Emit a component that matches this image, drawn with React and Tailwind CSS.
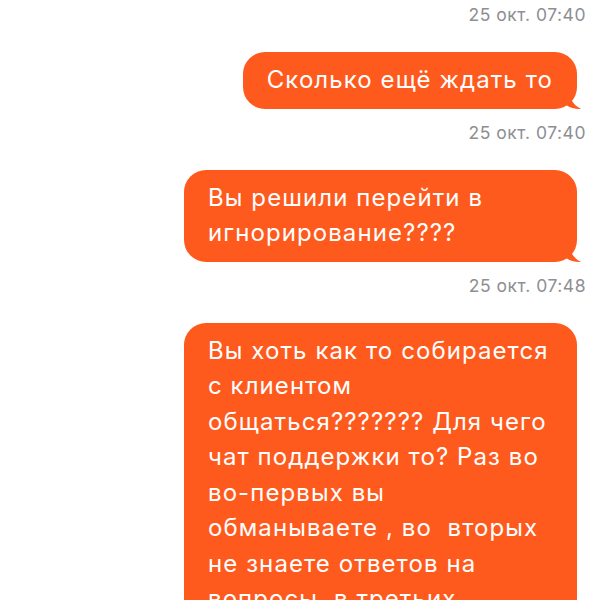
const messages = [
  { time: '25 окт. 07:40', text: 'Сколько ещё ждать то' },
  { time: '25 окт. 07:40', text: 'Вы решили перейти в игнорирование????' },
  {
    time: '25 окт. 07:48',
    text: 'Вы хоть как то собирается с клиентом общаться??????? Для чего чат поддержки то? Раз во во-первых вы обманываете , во  вторых не знаете ответов на вопросы, в третьих игнорируете',
  },
];

const Tail = () => (
  <svg className="absolute bottom-0 right-[-4px]" width="16" height="20" viewBox="0 0 16 20">
    <path d="M0 0 L4 0 C4 9 8 16 16 20 C9 20 3 18 0 15 Z" fill="#ff5a1e" />
  </svg>
);

const Bubble = ({ text }) => (
  <div className="flex justify-end pr-[23px]">
    <div className="relative max-w-[393px] bg-[#ff5a1e] text-white rounded-[22px] pl-[24px] pr-[24px] pt-[10px] pb-[11px] text-[24px] tracking-[0.045em] leading-[35.5px] whitespace-pre-wrap">
      {text}
      <Tail />
    </div>
  </div>
);

export default function App() {
  return (
    <div className="w-[600px] h-[600px] overflow-hidden bg-white font-['Inter','Noto_Sans',sans-serif]">
      <div className="flex flex-col pt-[5px]">
        {messages.map((m, i) => (
          <div key={i} className="flex flex-col">
            <div className="text-right pr-[14px] text-[17.5px] tracking-[0.03em] leading-[20px] text-[#8e8e93] mb-[27px]">{m.time}</div>
            <Bubble text={m.text} />
            <div className="h-[14px]" />
          </div>
        ))}
      </div>
    </div>
  );
}
